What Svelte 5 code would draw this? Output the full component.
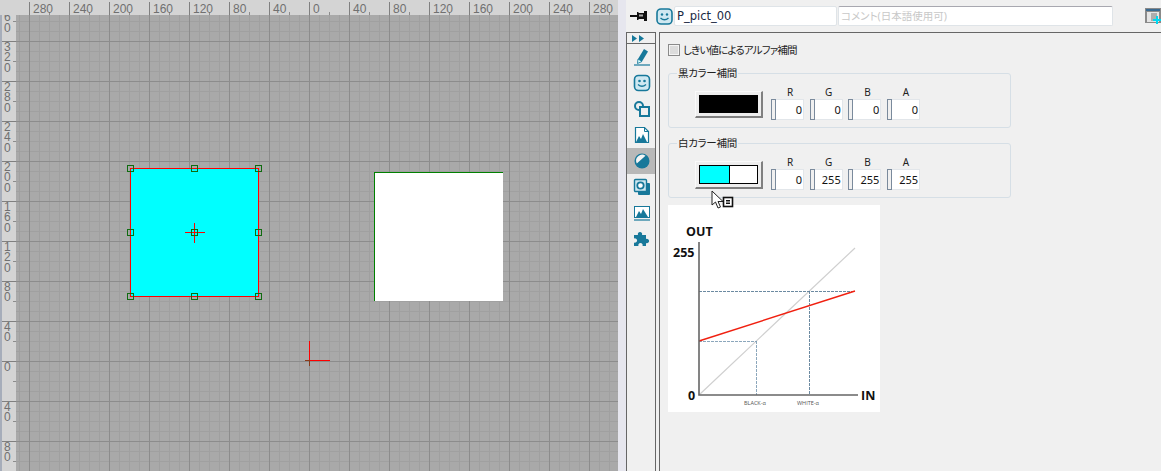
<script lang="ts">
  const topLabels = [280, 240, 200, 160, 120, 80, 40, 0, 40, 80, 120, 160, 200, 240, 280];
  const leftLabels = [360, 320, 280, 240, 200, 160, 120, 80, 40, 0, 40, 80];
  const handles = [
    [0, 0], [64, 0], [128, 0],
    [0, 64], [64, 64], [128, 64],
    [0, 128], [64, 128], [128, 128]
  ];
  const blackVals = [['R', 0], ['G', 0], ['B', 0], ['A', 0]];
  const whiteVals = [['R', 0], ['G', 255], ['B', 255], ['A', 255]];
</script>

{#snippet spins(vals)}
  <div class="spins">
    {#each vals as [name, val]}
      <div class="spin">
        <span class="spin-name">{name}</span>
        <div class="spin-row">
          <span class="thumb"></span>
          <span class="spin-val">{val}</span>
        </div>
      </div>
    {/each}
  </div>
{/snippet}

<div class="app">
  <div class="editor">
    <div class="ruler-top">
      <div class="corner"></div>
      <div class="top-cells">
        {#each topLabels as l}
          <span class="top-cell">{l}</span>
        {/each}
      </div>
    </div>
    <div class="editor-body">
      <div class="ruler-left">
        {#each leftLabels as l}
          <div class="left-cell">
            {#each String(l).split('') as d}
              <span>{d}</span>
            {/each}
          </div>
        {/each}
      </div>
      <div class="canvas">
        <div class="pict white"></div>
        <div class="pict cyan">
          <span class="cross-h"></span>
          <span class="cross-v"></span>
          {#each handles as [x, y]}
            <span class="handle" style="left: {x}px; top: {y}px"></span>
          {/each}
        </div>
        <span class="origin-h"></span>
        <span class="origin-v"></span>
      </div>
    </div>
  </div>

  <div class="splitter"></div>

  <div class="panel">
    <div class="header">
      <svg class="pin" width="17" height="12" viewBox="0 0 17 12">
        <path d="M0 5h7v2H0zM7 2h1.500v8H7zM8 3h6v6H8zM14 1h3v10h-3z" fill="#111" />
        <path d="M9 4.500h4v2H9z" fill="#aaa" />
      </svg>
      <svg class="face" width="17" height="17" viewBox="0 0 17 17">
        <rect x="1" y="1" width="15" height="15" rx="4" fill="#cfe8f1" stroke="#17789a" stroke-width="1.6" />
        <circle cx="6" cy="6.5" r="1.2" fill="#17789a" />
        <circle cx="11" cy="6.5" r="1.2" fill="#17789a" />
        <path d="M4.5 10q4 3.5 8 0" fill="none" stroke="#17789a" stroke-width="1.4" />
      </svg>
      <div class="field name">P_pict_00</div>
      <div class="field comment">コメント(日本語使用可)</div>
      <svg class="add" width="16" height="16" viewBox="0 0 16 16">
        <rect width="16" height="15" fill="#8a8a8a" />
        <rect x="1" y="1" width="14" height="2" fill="#3a6a90" />
        <rect x="2" y="4" width="12" height="10" fill="#e4e4e4" />
        <path d="M6 6h6M6 8h6M6 10h5M6 12h3" stroke="#777" />
        <path d="M12 8v8M8 12h8" stroke="#00d8f0" stroke-width="2" />
      </svg>
    </div>

    <div class="panel-body">
      <div class="tabs">
        <div class="tab-arrows">
          <svg width="12" height="7" viewBox="0 0 12 7"><path d="M0 0l5 3.5-5 3.5zM7 0l5 3.5-5 3.5z" fill="#17789a" /></svg>
        </div>
        <div class="tab">
          <svg width="20" height="20" viewBox="0 0 20 20">
            <path d="M6 12L12 2l4 2.500-6 10-4.500 2z" fill="#17789a" />
            <path d="M2 18h16" stroke="#17789a" stroke-width="1.2" />
            <path d="M6 12l4 2.500-4.500 2z" fill="#dff" stroke="#17789a" stroke-width="0.8" />
          </svg>
        </div>
        <div class="tab">
          <svg width="18" height="18" viewBox="0 0 18 18">
            <rect x="1.5" y="1.5" width="15" height="15" rx="4" fill="#cfe8f1" stroke="#17789a" stroke-width="1.6" />
            <circle cx="6.5" cy="7" r="1.3" fill="#17789a" />
            <circle cx="11.5" cy="7" r="1.3" fill="#17789a" />
            <path d="M5 10.5q4 3.5 8 0" fill="none" stroke="#17789a" stroke-width="1.4" />
          </svg>
        </div>
        <div class="tab">
          <svg width="18" height="18" viewBox="0 0 18 18">
            <circle cx="6" cy="6" r="4" fill="none" stroke="#17789a" stroke-width="2" />
            <rect x="7" y="7" width="9" height="9" fill="#f0f0f0" stroke="#17789a" stroke-width="2" />
          </svg>
        </div>
        <div class="tab">
          <svg width="18" height="18" viewBox="0 0 18 18">
            <path d="M2.500 1.500h9l4 4v11h-13z" fill="#fff" stroke="#17789a" stroke-width="1.2" />
            <path d="M11.500 1.500v4h4" fill="none" stroke="#17789a" />
            <path d="M3 16l3-6 2 3 2-5 4 8z" fill="#17789a" />
          </svg>
        </div>
        <div class="tab active">
          <svg width="18" height="18" viewBox="0 0 18 18">
            <circle cx="9" cy="9" r="7.5" fill="#17789a" />
            <path d="M3.800 11.500A6 6 0 0 1 12.500 3.800z" fill="#f4f4f4" />
          </svg>
        </div>
        <div class="tab">
          <svg width="18" height="18" viewBox="0 0 18 18">
            <rect x="5" y="5" width="12" height="12" rx="1" fill="#17789a" />
            <rect x="1.5" y="1.5" width="12" height="12" rx="1" fill="#cfe8f1" stroke="#17789a" stroke-width="1.4" />
            <circle cx="7.5" cy="7.5" r="3.2" fill="#fff" stroke="#17789a" stroke-width="1.8" />
          </svg>
        </div>
        <div class="tab">
          <svg width="18" height="18" viewBox="0 0 18 18">
            <rect x="1.5" y="2.5" width="15" height="11" fill="#fff" stroke="#17789a" />
            <path d="M3 13l3-6 2 3 2-5 5 8z" fill="#17789a" />
            <path d="M1 16h16" stroke="#17789a" stroke-width="1.2" />
          </svg>
        </div>
        <div class="tab">
          <svg width="18" height="18" viewBox="0 0 18 18">
            <path d="M1 5h4a2.200 2.200 0 1 1 4 0h4v4a2.200 2.200 0 1 1 0 4v3H9.500a2.200 2.200 0 1 0-4 0H1v-3.500a2.200 2.200 0 1 0 0-4z" fill="#17789a" />
          </svg>
        </div>
      </div>

      <div class="content">
        <label class="check-row">
          <span class="check"></span>
          <span class="check-text">しきい値によるアルファ補間</span>
        </label>

        <fieldset class="group">
          <legend>黒カラー補間</legend>
          <div class="group-row">
            <div class="color-btn"><span class="swatch black"></span></div>
            {@render spins(blackVals)}
          </div>
        </fieldset>

        <fieldset class="group second">
          <legend>白カラー補間</legend>
          <div class="group-row">
            <div class="color-btn tall"><span class="swatch two"><i></i></span></div>
            {@render spins(whiteVals)}
          </div>
        </fieldset>

        <svg class="chart" width="212" height="207" viewBox="0 0 212 207">
          <rect width="212" height="207" fill="#fff" />
          <path d="M31 190L187 43" stroke="#cfcfcf" stroke-width="1.2" fill="none" />
          <path d="M31 86.500H187M141.500 86V190" stroke="#5b7d96" stroke-width="0.9" stroke-dasharray="3 1" fill="none" />
          <path d="M31 136.500H89M88.500 136V190" stroke="#7f9db4" stroke-width="0.9" stroke-dasharray="3 1" fill="none" />
          <path d="M31 136L187 86" stroke="#f02010" stroke-width="1.4" fill="none" />
          <path d="M31 37V190H190" stroke="#666" stroke-width="1.6" fill="none" />
          <text class="ct" x="18" y="31">OUT</text>
          <text class="ct" x="5" y="52">255</text>
          <text class="ct" x="20" y="195">0</text>
          <text class="ct" x="193" y="195">IN</text>
          <text class="cs" x="76" y="200">BLACK-α</text>
          <text class="cs" x="129" y="200">WHITE-α</text>
        </svg>

        <svg class="cursor" width="24" height="20" viewBox="0 0 24 20">
          <path d="M1 1v14l3.500-3 2.500 6 2.500-1-2.500-5.500h5z" fill="#fff" stroke="#222" />
          <rect x="12.500" y="7.500" width="9" height="9" fill="#fff" stroke="#111" stroke-width="1.6" />
          <path d="M15 10.500h4M15 12h4M15 13.500h4" stroke="#111" />
        </svg>
      </div>
    </div>
  </div>
</div>

<style>
  :global(body) {
    margin: 0;
    background: #f0f0f0;
  }
  .app {
    width: 1161px;
    height: 471px;
    display: flex;
    overflow: hidden;
    font-family: "Noto Sans", "Noto Sans CJK JP", sans-serif;
    color: #222;
  }
  .editor {
    width: 618px;
    display: flex;
    flex-direction: column;
    flex-shrink: 0;
  }
  .ruler-top {
    height: 15px;
    display: flex;
    background: #d4d4d4;
    flex-shrink: 0;
  }
  .corner {
    width: 16px;
    flex-shrink: 0;
  }
  .top-cells {
    flex: 1;
    display: flex;
    overflow: hidden;
    padding-left: 13px;
  }
  .top-cell {
    width: 40px;
    flex-shrink: 0;
    box-sizing: border-box;
    padding-left: 4px;
    font-family: "Liberation Sans", sans-serif;
    font-size: 12px;
    line-height: 18px;
    color: #707070;
    background: linear-gradient(#808080, #808080) 0 2px / 1px 13px no-repeat,
      linear-gradient(#8c8c8c, #8c8c8c) 20px 12px / 1px 3px no-repeat;
  }
  .editor-body {
    flex: 1;
    display: flex;
    min-height: 0;
  }
  .ruler-left {
    width: 14px;
    flex-shrink: 0;
    overflow: hidden;
    background: #d4d4d4;
    border-left: 2px solid #a6adba;
    display: flex;
    flex-direction: column;
  }
  .left-cell {
    height: 40px;
    flex-shrink: 0;
    box-sizing: border-box;
    padding: 1px 0 0 2px;
    display: flex;
    flex-direction: column;
    font-family: "Liberation Sans", sans-serif;
    font-size: 12px;
    line-height: 10px;
    color: #707070;
    background: linear-gradient(#808080, #808080) 0 0 / 14px 1px no-repeat,
      linear-gradient(#8c8c8c, #8c8c8c) 11px 20px / 3px 1px no-repeat;
  }
  .left-cell span {
    height: 10.3px;
  }
  .left-cell:first-child {
    margin-top: -14px;
  }
  .canvas {
    flex: 1;
    position: relative;
    overflow: hidden;
    background-color: #a9a9a9;
    background-image:
      linear-gradient(90deg, #8c8c8c 1px, transparent 1px),
      linear-gradient(#8c8c8c 1px, transparent 1px),
      linear-gradient(90deg, #a0a0a0 1px, transparent 1px),
      linear-gradient(#a0a0a0 1px, transparent 1px);
    background-size: 40px 40px, 40px 40px, 10px 10px, 10px 10px;
    background-position: 13px 26px, 13px 26px, 3px 6px, 3px 6px;
  }
  .pict {
    position: absolute;
    box-sizing: border-box;
  }
  .white {
    left: 358px;
    top: 157px;
    width: 129px;
    height: 129px;
    background: #fff;
    border-top: 1px solid #008000;
    border-left: 1px solid #008000;
  }
  .cyan {
    left: 114px;
    top: 153px;
    width: 129px;
    height: 129px;
    background: #00ffff;
    border: 1px solid #ff0000;
  }
  .handle {
    position: absolute;
    width: 7px;
    height: 7px;
    margin: -4px 0 0 -4px;
    box-sizing: border-box;
    border: 1px solid #0f6b0f;
  }
  .cross-h {
    position: absolute;
    left: 54px;
    top: 63px;
    width: 20px;
    height: 1px;
    background: #f00;
  }
  .cross-v {
    position: absolute;
    left: 63px;
    top: 54px;
    width: 1px;
    height: 20px;
    background: #f00;
  }
  .origin-h {
    position: absolute;
    left: 289px;
    top: 345px;
    width: 25px;
    height: 1px;
    background: linear-gradient(90deg, #8a3a1a 18%, #f00 18%);
  }
  .origin-v {
    position: absolute;
    left: 293px;
    top: 326px;
    width: 1px;
    height: 25px;
    background: linear-gradient(#f00 75%, #8a3a1a 75%);
  }
  .splitter {
    width: 8px;
    flex-shrink: 0;
    background: #e6e6ee;
  }
  .panel {
    flex: 1;
    display: flex;
    flex-direction: column;
    background: #f0f0f0;
    min-width: 0;
  }
  .header {
    height: 32px;
    flex-shrink: 0;
    display: flex;
    align-items: center;
    padding-left: 4px;
  }
  .pin {
    margin-right: 9px;
  }
  .face {
    margin-right: 1px;
  }
  .field {
    height: 20px;
    box-sizing: border-box;
    background: #fff;
    border: 1px solid #dfe4e8;
    border-radius: 2px;
    font-size: 11px;
    line-height: 18px;
    padding-left: 2px;
  }
  .name {
    width: 163px;
    margin-right: 1px;
    font-family: "DejaVu Sans", sans-serif;
    font-size: 11.5px;
    color: #1a2a44;
  }
  .comment {
    width: 275px;
    margin-right: 32px;
    border-top-color: #a8a8b0;
    color: #c8c8c8;
    font-feature-settings: "palt";
    font-size: 10.5px;
  }
  .add {
    flex-shrink: 0;
  }
  .panel-body {
    flex: 1;
    display: flex;
    min-height: 0;
  }
  .tabs {
    width: 28px;
    flex-shrink: 0;
    border: 1px solid #666;
    border-bottom: 0;
    display: flex;
    flex-direction: column;
    margin-right: 3px;
  }
  .tab-arrows {
    height: 10px;
    border-bottom: 1px solid #666;
    display: flex;
    align-items: center;
    justify-content: center;
    padding-right: 6px;
  }
  .tab {
    height: 26px;
    display: flex;
    align-items: center;
    justify-content: center;
    padding-left: 1px;
  }
  .tab.active {
    background: #b8b8b8;
  }
  .content {
    flex: 1;
    position: relative;
    border-top: 1px solid #666;
    border-left: 1px solid #666;
    padding: 11px 0 0 8px;
    display: flex;
    flex-direction: column;
    align-items: flex-start;
  }
  .check-row {
    display: flex;
    align-items: center;
    gap: 3px;
    font-size: 10.5px;
    line-height: 12px;
    font-feature-settings: "palt";
  }
  .check-text {
    letter-spacing: -0.85px;
  }
  .check {
    width: 12px;
    height: 12px;
    box-sizing: border-box;
    border: 1px solid #8a8a8a;
    background: #dcdcdc;
    box-shadow: inset 0 0 0 1px #f4f4f4;
  }
  .group {
    width: 343px;
    height: 62px;
    box-sizing: border-box;
    margin: 10px 0 0;
    padding: 0;
    border: 1px solid #d6dfe6;
    border-radius: 3px;
    min-inline-size: 0;
  }
  .group.second {
    margin-top: 8px;
  }
  legend {
    margin-left: 8px;
    padding: 0 1px;
    font-size: 10.5px;
    line-height: 14px;
    font-feature-settings: "palt";
    letter-spacing: -0.3px;
  }
  .group-row {
    display: flex;
    align-items: flex-end;
    height: 40px;
    gap: 8px;
    padding-left: 26px;
  }
  .color-btn {
    width: 68px;
    height: 27px;
    box-sizing: border-box;
    background: #eee;
    border-style: solid;
    border-width: 1px 2px 2px 1px;
    border-color: #fafafa #808080 #808080 #fafafa;
    padding: 3px;
    display: flex;
    margin-bottom: 2px;
  }
  .color-btn.tall {
    height: 28px;
    margin-bottom: 1px;
  }
  .swatch {
    flex: 1;
    box-sizing: border-box;
    border: 1px solid #000;
    display: block;
    background: #fff;
  }
  .swatch.black {
    background: #000;
  }
  .swatch.two i {
    display: block;
    width: 30px;
    height: 100%;
    background: #00ffff;
    border-right: 1px solid #000;
    box-sizing: border-box;
  }
  .spins {
    display: grid;
    grid-template-columns: repeat(4, 33px);
    column-gap: 5.7px;
  }
  .spin {
    display: flex;
    flex-direction: column;
    align-items: flex-end;
  }
  .spin-name {
    width: 28px;
    text-align: center;
    font-size: 10px;
    line-height: 14px;
  }
  .spin-row {
    display: flex;
    height: 21px;
  }
  .thumb {
    width: 5px;
    box-sizing: border-box;
    border: 1px solid #7a8a9c;
    background: #f0f0f0;
  }
  .spin-val {
    width: 28px;
    box-sizing: border-box;
    background: #fff;
    border: 1px solid #e2e6ea;
    border-left: 0;
    text-align: right;
    padding-right: 1px;
    font-size: 11px;
    line-height: 19px;
    color: #111;
  }
  .chart {
    margin-top: 7px;
    display: block;
  }
  .ct {
    font-family: "Open Sans", sans-serif;
    font-weight: 700;
    font-size: 12.5px;
    fill: #111;
  }
  .cs {
    font-family: "Open Sans", sans-serif;
    font-size: 5.5px;
    fill: #555;
  }
  .cursor {
    position: absolute;
    left: 51px;
    top: 157px;
  }
</style>
